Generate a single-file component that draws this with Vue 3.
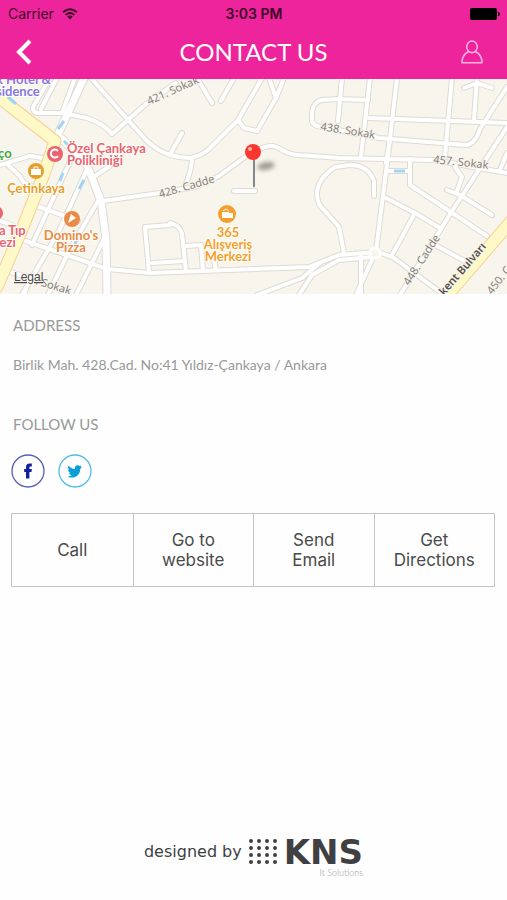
<script setup>
/* Contact screen: status bar, title bar, map, address, social links, actions. */

/* ---- map data ------------------------------------------------------------ */
// Minor streets, in map units (507 x 215)
const streets = [
  "M50-1L33 28Q33 34 38 34L63 34L87 39Q104 45 112 55L146 25L176 4",
  "M57-1L41 30",
  "M75-1L62 34",
  "M91-1L128 41L147 62Q158 72 170 76Q180 79 190 79Q201 77 209 70L238 41L262-1",
  "M0 86L30 77L43 79",
  "M8 86L20 97Q22 105 34 108",
  "M110 87L95 97",
  "M103 122L160 114L195 108L219 97L245 78Q262 67 272 67C280 67 284 76 299 76L339 79L434 81L507 94",
  "M37 127L78 142",
  "M0 142L12 146",
  "M20 160L107 190L150 194L309 188L339 176L376 173",
  "M72 78L32 166",
  "M88 88L60 150L22 216",
  "M98 122L70 170L48 216",
  "M104 160L76 216",
  "M8 192L30 199L24 216",
  "M170 146L145 148L149 193",
  "M152 184L184 182",
  "M170 144Q180 146 182 155L186 192",
  "M186 167L201 166L203 192",
  "M214 181L216 191",
  "M182 54L171 74",
  "M192 79Q192 90 186 104",
  "M199 2L212 24",
  "M234-1L221 22",
  "M238 41L244 49L257 52L276 19L269-1",
  "M276 19L284-1",
  "M234 112L255 112",
  "M339 20L321 21Q313 24 312 33L312 42Q313 47 322 48L379 59L465 66Q475 66 480 50L507 8",
  "M342-1L338 42",
  "M337 20L368 21",
  "M370-1L361 77",
  "M397-1L388 77L376 172",
  "M390 60L386 84",
  "M369 39L507 44",
  "M452-1L445 77",
  "M477-1L474 41",
  "M464 9L477 4L492 9",
  "M410 80L410 106L487 157",
  "M388 92L409 92",
  "M455 88L462 98L457 112",
  "M447 111L460 116L492 136",
  "M384 118L415 134L440 149",
  "M415 134L392 176",
  "M435 166L465 182",
  "M376 172L394 179L444 216",
  "M376 172L356 216",
  "M361 176L361 216",
  "M374 117L374 102Q368 86 350 86L335 88Q317 100 317 115Q317 126 325 132L339 148L344 174",
  "M299 216L312 196L339 181L372 178",
  "M257 216L302 199L320 184",
  "M500 91L507 74",
  "M507 48L452 132L400 216",
];

const avenues = ["M84-1L55 62", "M62 60L87 86L101 122L106 160L107 216"];

const mainRoads = ["M-3 17L55 62L44 95L20 155L-3 208", "M513 140L446 218"];

const water = [
  "M8 18L16 25",
  "M64 42L58 50",
  "M64 62L70 68",
  "M63 94L60 102",
  "M84 101L79 110",
  "M76 162L74 168",
  "M394 92L405 92",
];

const streetLabels = [
  { text: "421. Sokak", x: 149, y: 26, angle: -24 },
  { text: "428. Cadde", x: 160, y: 119, angle: -16 },
  { text: "438. Sokak", x: 320, y: 51, angle: 9 },
  { text: "457. Sokak", x: 433, y: 84, angle: 6 },
  { text: "448. Cadde", x: 409, y: 207, angle: -57 },
  { text: "450. Cadde", x: 492, y: 216, angle: -52 },
  { text: ". Sokak", x: 35, y: 205, angle: 17 },
];

const places = [
  { tone: "hotel", x: -4, y: 5, anchor: "start", lines: ["k Hotel &", "sidence"] },
  { tone: "health", x: 67, y: 74, anchor: "start", lines: ["Özel Çankaya", "Polikliniği"] },
  { tone: "park", x: -2, y: 79, anchor: "start", lines: ["ço"] },
  { tone: "shop", x: 36, y: 114, anchor: "middle", lines: ["Çetinkaya"] },
  { tone: "food", x: 71, y: 161, anchor: "middle", lines: ["Domino's", "Pizza"] },
  { tone: "health", x: -1, y: 156, anchor: "start", lines: ["a Tıp"] },
  { tone: "health", x: -7, y: 168, anchor: "start", lines: ["kezi"] },
  { tone: "mall", x: 228, y: 158, anchor: "middle", lines: ["365", "Alışveriş", "Merkezi"] },
];

/* ---- actions ------------------------------------------------------------- */
const actions = [
  { id: "call", lines: ["Call"] },
  { id: "website", lines: ["Go to", "website"] },
  { id: "email", lines: ["Send", "Email"] },
  { id: "directions", lines: ["Get", "Directions"] },
];
</script>

<template>
  <div class="contact-page">
    <header class="top">
      <div class="status-bar">
        <span class="carrier">
          Carrier
          <svg class="wifi" viewBox="0 0 16 12" aria-hidden="true">
            <path d="M1 4.2Q8-1.8 15 4.2M3.6 6.9Q8 3.1 12.4 6.9" />
            <path class="wifi-dot" d="M5.3 8.6Q8 6.5 10.7 8.6L8 11.5Z" />
          </svg>
        </span>
        <time class="clock">3:03 PM</time>
        <svg class="battery" viewBox="0 0 30 12" aria-hidden="true">
          <rect width="27" height="12" rx="2" />
          <path d="M28 4Q30 4 30 6Q30 8 28 8Z" />
        </svg>
      </div>
      <nav class="nav-bar">
        <button type="button" class="nav-button" aria-label="Back">
          <svg class="back-icon" viewBox="0 0 16 26" aria-hidden="true">
            <path d="M14 2L3 13L14 24" />
          </svg>
        </button>
        <h1 class="title">CONTACT US</h1>
        <button type="button" class="nav-button" aria-label="Profile">
          <svg class="user-icon" viewBox="0 0 22 24" aria-hidden="true">
            <ellipse cx="11" cy="6.8" rx="5.3" ry="5.9" />
            <path d="M7.5 11.8Q1 14.5 1 22.8H21Q21 14.5 14.5 11.8" />
          </svg>
        </button>
      </nav>
    </header>

    <svg class="map" viewBox="0 0 507 215" role="img" aria-label="Map">
      <defs>
        <filter id="pin-blur" x="-50%" y="-50%" width="200%" height="200%">
          <feGaussianBlur stdDeviation="2" />
        </filter>
      </defs>
      <rect class="land" width="507" height="215" />
      <path v-for="d in streets" :key="'c' + d" class="street-casing" :d="d" />
      <path v-for="d in avenues" :key="'c' + d" class="avenue-casing" :d="d" />
      <path v-for="d in streets" :key="d" class="street" :d="d" />
      <path v-for="d in avenues" :key="d" class="avenue" :d="d" />
      <path v-for="d in mainRoads" :key="'c' + d" class="main-casing" :d="d" />
      <path v-for="d in mainRoads" :key="d" class="main-road" :d="d" />
      <circle class="roundabout" cx="375" cy="174" r="5" />
      <path v-for="d in water" :key="d" class="water" :d="d" />

      <text
        v-for="label in streetLabels"
        :key="label.text"
        class="street-label"
        :transform="`translate(${label.x} ${label.y}) rotate(${label.angle})`"
      >{{ label.text }}</text>
      <text class="street-label major" transform="translate(444 217) rotate(-49)">kent Bulvarı</text>

      <text
        v-for="place in places"
        :key="place.lines[0]"
        class="place"
        :class="place.tone"
        :text-anchor="place.anchor"
      >
        <tspan
          v-for="(line, i) in place.lines"
          :key="line"
          :x="place.x"
          :y="place.y + i * 12"
        >{{ line }}</tspan>
      </text>

      <!-- place badges -->
      <g class="badge health">
        <circle cx="55" cy="75" r="8" />
        <path class="glyph-line" d="M58 72A4 4 0 1 0 58 77" />
      </g>
      <g class="badge shop">
        <circle cx="36" cy="92" r="8" />
        <path class="glyph" d="M31 90H41V96H31Z" />
        <path class="glyph-line thin" d="M34 90V88H38V90" />
      </g>
      <g class="badge food">
        <circle cx="72" cy="140" r="8" />
        <path class="glyph" d="M68 144L71 135L76 139Z" />
      </g>
      <g class="badge health">
        <circle cx="-4" cy="134" r="7" />
      </g>
      <g class="badge mall">
        <circle cx="227" cy="135" r="9" />
        <path class="glyph-line thin" d="M223 132L226 130L229 132" />
        <path class="glyph" d="M222 133H229V134H233V139H222Z" />
      </g>

      <a href="#legal"><text class="legal" x="14" y="202">Legal</text></a>

      <!-- dropped pin -->
      <ellipse class="pin-shadow" cx="266" cy="87" rx="9" ry="4" transform="rotate(-10 266 87)" />
      <path class="pin-needle" d="M254 80V108" />
      <circle class="pin-head" cx="253" cy="73" r="8" />
      <circle class="pin-shine" cx="250" cy="70" r="2" />
    </svg>

    <main class="details">
      <section class="block">
        <h2 class="heading">ADDRESS</h2>
        <p class="address">Birlik Mah. 428.Cad. No:41 Yıldız-Çankaya / Ankara</p>
      </section>

      <section class="block">
        <h2 class="heading">FOLLOW US</h2>
        <div class="social">
          <a href="#facebook" class="social-link facebook" aria-label="Facebook">
            <svg viewBox="0 0 34 34" aria-hidden="true">
              <circle class="ring" cx="17" cy="17" r="16" />
              <path d="M15 24.5V18H13.2V15H15V13.2C15 10.8 16.4 9.5 18.6 9.5H20.8V12.6H19.5C18.7 12.6 18.4 13 18.4 13.8V15H20.8L20.5 18H18.4V24.5Z" />
            </svg>
          </a>
          <a href="#twitter" class="social-link twitter" aria-label="Twitter">
            <svg viewBox="0 0 34 34" aria-hidden="true">
              <circle class="ring" cx="17" cy="17" r="16" />
              <path d="M23.8 13.1L22.2 15C22.3 20.3 18.3 23.6 14 23.6C12.2 23.6 10.9 23.2 9.8 22.4C11.5 22.4 12.7 22 13.8 21.1C12.3 20.9 11.4 20 11 18.9H12.3C10.8 18.3 10 17.1 10 15.5L11.3 15.9C10 14.7 9.7 13.2 10.5 11.8C12.1 13.7 14.2 14.8 16.9 15C16.5 12.6 17.8 11.2 19.7 11.2C20.6 11.2 21.3 11.5 21.8 12L23.6 11.4L22.6 13.1Z" />
            </svg>
          </a>
        </div>
      </section>

      <div class="actions">
        <button v-for="action in actions" :key="action.id" type="button" class="action">
          <span v-for="line in action.lines" :key="line">{{ line }}</span>
        </button>
      </div>
    </main>

    <footer class="credit">
      <span class="credit-text">designed by</span>
      <svg class="dots" viewBox="0 0 30 26" aria-hidden="true">
        <template v-for="row in 4" :key="row">
          <circle v-for="col in 4" :key="col" :cx="col * 8 - 5" :cy="row * 7 - 5" r="2" />
        </template>
      </svg>
      <span class="brand">
        <strong class="brand-name">KNS</strong>
        <small class="brand-sub">It Solutions</small>
      </span>
    </footer>
  </div>
</template>

<style>
body {
  background: #fefefe;
}
</style>

<style scoped>
.contact-page {
  display: flex;
  flex-direction: column;
  min-height: 100vh;
  background: #fefefe;
  color: #999;
  font-family: Lato, sans-serif;
}

button {
  font: inherit;
  color: inherit;
  background: none;
  border: 0;
  padding: 0;
  cursor: pointer;
}

/* ---- header ---- */
.top {
  background: #ee249c;
}
.status-bar {
  display: grid;
  grid-template-columns: 1fr auto 1fr;
  align-items: center;
  height: 27px;
  padding: 0 7px 0 8px;
  color: #3b0826;
  font-family: Inter, sans-serif;
  font-size: 14px;
}
.carrier {
  display: flex;
  align-items: center;
  gap: 8px;
}
.wifi {
  width: 16px;
  height: 12px;
  fill: none;
  stroke: #3b0826;
  stroke-width: 1.8;
}
.wifi-dot {
  fill: #3b0826;
  stroke: none;
}
.clock {
  font-weight: 600;
}
.battery {
  justify-self: end;
  width: 30px;
  height: 12px;
  fill: #000;
}
.nav-bar {
  display: flex;
  align-items: center;
  justify-content: space-between;
  height: 50px;
  padding: 0 12px 2px;
  color: #fff;
}
.nav-button {
  display: flex;
  align-items: center;
  justify-content: center;
  width: 46px;
  height: 44px;
}
.nav-button:first-child {
  justify-content: flex-start;
  padding-left: 4px;
}
.title {
  margin: 0;
  font-size: 24px;
  font-weight: 400;
  line-height: 28px;
}
.back-icon {
  width: 16px;
  height: 26px;
  fill: none;
  stroke: #fff;
  stroke-width: 4;
}
.user-icon {
  width: 22px;
  height: 24px;
  fill: none;
  stroke: #ffb5e0;
  stroke-width: 1.5;
  stroke-linejoin: round;
}

/* ---- map ---- */
.map {
  display: block;
  width: 100%;
  height: auto;
  overflow: hidden;
}
.land {
  fill: #f8f5ed;
}
.street,
.street-casing,
.avenue,
.avenue-casing,
.main-road,
.main-casing,
.water {
  fill: none;
  stroke-linecap: round;
  stroke-linejoin: round;
}
.street-casing {
  stroke: #dedbd5;
  stroke-width: 6;
}
.street {
  stroke: #fff;
  stroke-width: 4;
}
.avenue-casing {
  stroke: #dedbd5;
  stroke-width: 9;
}
.avenue {
  stroke: #fff;
  stroke-width: 7;
}
.main-casing {
  stroke: #f8cf98;
  stroke-width: 13;
}
.main-road {
  stroke: #fff9c8;
  stroke-width: 11;
}
.roundabout {
  fill: #f8f5ed;
  stroke: #fff;
  stroke-width: 3;
}
.water {
  stroke: #9fd4f3;
  stroke-width: 3;
  stroke-linecap: butt;
}
.street-label {
  fill: #85817d;
  stroke: #f8f5ed;
  stroke-width: 2;
  paint-order: stroke;
  font-family: "Noto Sans", sans-serif;
  font-size: 11px;
}
.street-label.major {
  fill: #55504a;
  font-weight: 600;
}
.place {
  stroke: #fffdf8;
  stroke-width: 2;
  paint-order: stroke;
  font-size: 13px;
  font-weight: 700;
}
.badge {
  stroke: none;
}
.hotel {
  fill: #8878e0;
}
.health {
  fill: #ea6470;
}
.park {
  fill: #3da83d;
}
.shop {
  fill: #e5a02c;
}
.food {
  fill: #e98a45;
}
.mall {
  fill: #f5a02c;
}
.glyph {
  fill: #fff;
}
.glyph-line {
  fill: none;
  stroke: #fff;
  stroke-width: 2;
}
.glyph-line.thin {
  stroke-width: 1;
}
.legal {
  fill: #4c4945;
  font-family: "Liberation Sans", sans-serif;
  font-size: 12px;
  text-decoration: underline;
}
.pin-shadow {
  fill: #8c8880;
  opacity: 0.8;
  filter: url(#pin-blur);
}
.pin-needle {
  stroke: #85878e;
  stroke-width: 2;
}
.pin-head {
  fill: #fb3830;
}
.pin-shine {
  fill: #ffb3ad;
}

/* ---- details ---- */
.details {
  flex: 1;
  padding: 21px 12px 0 11px;
}
.block {
  padding-left: 2px;
  margin-bottom: 39px;
}
.block + .block {
  margin-bottom: 25px;
}
.heading {
  margin: 0 0 20px;
  font-size: 15px;
  font-weight: 400;
  line-height: 20px;
}
.address {
  margin: 0;
  font-size: 14px;
  line-height: 20px;
}
.social {
  display: flex;
  gap: 13px;
  margin-left: -2px;
}
.social-link {
  width: 34px;
  height: 34px;
}
.social-link svg {
  display: block;
}
.facebook {
  fill: #12209a;
  stroke: #5560b4;
}
.twitter {
  fill: #0a9fd8;
  stroke: #52bce4;
}
.social-link path {
  stroke: none;
}
.ring {
  fill: none;
  stroke-width: 1.3;
}
.actions {
  display: grid;
  grid-template-columns: repeat(4, minmax(0, 1fr));
  border: 1px solid #c4c4c4;
}
.action {
  display: flex;
  flex-direction: column;
  align-items: center;
  justify-content: center;
  height: 72px;
  color: #4a4a4a;
  font-family: Inter, sans-serif;
  font-size: 17px;
  line-height: 20px;
}
.action + .action {
  border-left: 1px solid #c4c4c4;
}

/* ---- footer ---- */
.credit {
  display: flex;
  justify-content: center;
  gap: 6px;
  padding-bottom: 19px;
  color: #404042;
}
.credit-text {
  font-family: "DejaVu Sans", sans-serif;
  font-size: 16px;
  line-height: 26px;
}
.dots {
  width: 30px;
  height: 26px;
  fill: #404042;
}
.brand {
  display: flex;
  flex-direction: column;
  align-items: flex-end;
}
.brand-name {
  font-family: "DejaVu Sans", sans-serif;
  font-size: 34px;
  line-height: 26px;
}
.brand-sub {
  color: #999;
  font-size: 9px;
  font-weight: 300;
  line-height: 16px;
}
</style>
